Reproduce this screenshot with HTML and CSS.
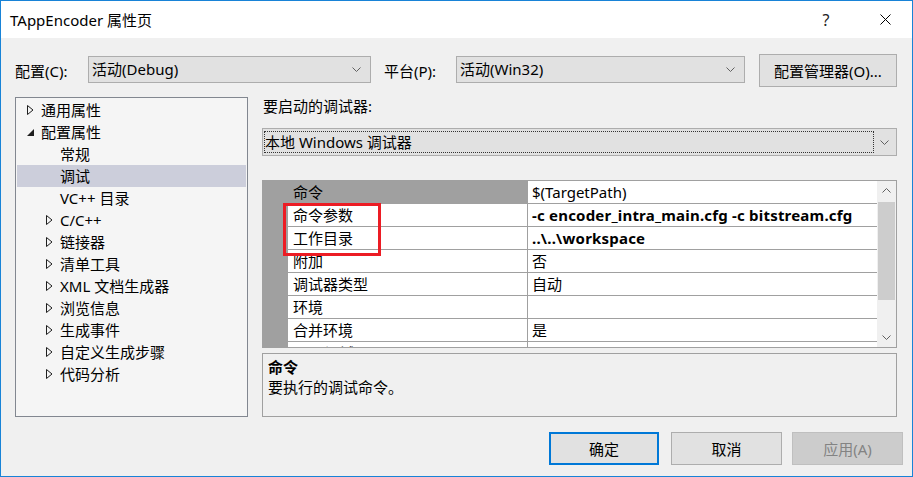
FILE: index.html
```html
<!DOCTYPE html>
<html>
<head>
    <meta charset="UTF-8">
    <title>TAppEncoder 属性页</title>
    <link rel="stylesheet" href="styles.css">
</head>
<body>
<div class="window">
    <div class="titlebar">
        <span class="title">TAppEncoder 属性页</span>
        <span class="tb-help">?</span>
        <span class="tb-close">
            <svg width="11" height="11" viewBox="0 0 11 11"><path d="M0.5 0.5 L10.5 10.5 M10.5 0.5 L0.5 10.5" stroke="#000" stroke-width="1" fill="none"/></svg>
        </span>
    </div>

    <div class="content">
        <div class="toprow">
            <span class="row-label label-config">配置(C):</span>
            <div class="combo combo-config">
                <span class="combo-text">活动(Debug)</span>
                <svg class="chev" width="9" height="5" viewBox="0 0 9 5"><path d="M0.5 0.5 L4.5 4.5 L8.5 0.5" fill="none" stroke="#606060"/></svg>
            </div>
            <span class="row-label label-platform">平台(P):</span>
            <div class="combo combo-platform">
                <span class="combo-text">活动(Win32)</span>
                <svg class="chev" width="9" height="5" viewBox="0 0 9 5"><path d="M0.5 0.5 L4.5 4.5 L8.5 0.5" fill="none" stroke="#606060"/></svg>
            </div>
            <button class="btn btn-manager">配置管理器(O)...</button>
        </div>

        <div class="main">
            <div class="tree">
                <div class="node lvl0"><span class="exp"><svg width="7" height="10" viewBox="0 0 7 10"><path d="M0.5 0.5 L6 5 L0.5 9.5 Z" fill="none" stroke="#1e1e1e"/></svg></span>通用属性</div>
                <div class="node lvl0"><span class="exp"><svg width="7" height="7" viewBox="0 0 7 7"><path d="M7 0 L7 7 L0 7 Z" fill="#1e1e1e"/></svg></span>配置属性</div>
                <div class="node lvl1"><span class="exp"></span>常规</div>
                <div class="node lvl1 selected"><span class="exp"></span>调试</div>
                <div class="node lvl1"><span class="exp"></span>VC++ 目录</div>
                <div class="node lvl1"><span class="exp"><svg width="7" height="10" viewBox="0 0 7 10"><path d="M0.5 0.5 L6 5 L0.5 9.5 Z" fill="none" stroke="#1e1e1e"/></svg></span>C/C++</div>
                <div class="node lvl1"><span class="exp"><svg width="7" height="10" viewBox="0 0 7 10"><path d="M0.5 0.5 L6 5 L0.5 9.5 Z" fill="none" stroke="#1e1e1e"/></svg></span>链接器</div>
                <div class="node lvl1"><span class="exp"><svg width="7" height="10" viewBox="0 0 7 10"><path d="M0.5 0.5 L6 5 L0.5 9.5 Z" fill="none" stroke="#1e1e1e"/></svg></span>清单工具</div>
                <div class="node lvl1"><span class="exp"><svg width="7" height="10" viewBox="0 0 7 10"><path d="M0.5 0.5 L6 5 L0.5 9.5 Z" fill="none" stroke="#1e1e1e"/></svg></span>XML 文档生成器</div>
                <div class="node lvl1"><span class="exp"><svg width="7" height="10" viewBox="0 0 7 10"><path d="M0.5 0.5 L6 5 L0.5 9.5 Z" fill="none" stroke="#1e1e1e"/></svg></span>浏览信息</div>
                <div class="node lvl1"><span class="exp"><svg width="7" height="10" viewBox="0 0 7 10"><path d="M0.5 0.5 L6 5 L0.5 9.5 Z" fill="none" stroke="#1e1e1e"/></svg></span>生成事件</div>
                <div class="node lvl1"><span class="exp"><svg width="7" height="10" viewBox="0 0 7 10"><path d="M0.5 0.5 L6 5 L0.5 9.5 Z" fill="none" stroke="#1e1e1e"/></svg></span>自定义生成步骤</div>
                <div class="node lvl1"><span class="exp"><svg width="7" height="10" viewBox="0 0 7 10"><path d="M0.5 0.5 L6 5 L0.5 9.5 Z" fill="none" stroke="#1e1e1e"/></svg></span>代码分析</div>
            </div>

            <div class="panel">
                <div class="panel-label">要启动的调试器:</div>
                <div class="combo combo-debugger">
                    <span class="combo-text focus">本地 Windows 调试器</span>
                    <svg class="chev" width="9" height="5" viewBox="0 0 9 5"><path d="M0.5 0.5 L4.5 4.5 L8.5 0.5" fill="none" stroke="#606060"/></svg>
                </div>

                <div class="grid">
                    <div class="grid-rows">
                        <div class="prop selected"><span class="pname">命令</span><span class="pval">$(TargetPath)</span></div>
                        <div class="prop"><span class="pname">命令参数</span><span class="pval bold">-c encoder_intra_main.cfg -c bitstream.cfg</span></div>
                        <div class="prop"><span class="pname">工作目录</span><span class="pval bold">..\..\workspace</span></div>
                        <div class="prop"><span class="pname">附加</span><span class="pval">否</span></div>
                        <div class="prop"><span class="pname">调试器类型</span><span class="pval">自动</span></div>
                        <div class="prop"><span class="pname">环境</span><span class="pval"></span></div>
                        <div class="prop"><span class="pname">合并环境</span><span class="pval">是</span></div>
                        <div class="prop"><span class="pname">SQL 调试</span><span class="pval">否</span></div>
                    </div>
                    <div class="scrollbar">
                        <div class="sb-arrow">
                            <svg width="9" height="5" viewBox="0 0 9 5"><path d="M0.5 4.5 L4.5 0.5 L8.5 4.5" fill="none" stroke="#606060"/></svg>
                        </div>
                        <div class="sb-track"><div class="sb-thumb"></div></div>
                        <div class="sb-arrow">
                            <svg width="9" height="5" viewBox="0 0 9 5"><path d="M0.5 0.5 L4.5 4.5 L8.5 0.5" fill="none" stroke="#606060"/></svg>
                        </div>
                    </div>
                    <div class="callout"></div>
                </div>

                <div class="desc">
                    <div class="desc-title">命令</div>
                    <div class="desc-text">要执行的调试命令。</div>
                </div>
            </div>
        </div>

        <div class="footer">
            <button class="btn btn-ok">确定</button>
            <button class="btn btn-cancel">取消</button>
            <button class="btn btn-apply" disabled>应用(A)</button>
        </div>
    </div>
</div>
</body>
</html>
```

FILE: styles.css
```css
body { margin: 0; font-family: "Noto Sans", "Noto Sans CJK SC", sans-serif; font-size: 15px; color: #000; }

.window {
    width: 913px;
    height: 477px;
    box-sizing: border-box;
    border: 1px solid #1883d7;
    background: #f0f0f0;
    display: flex;
    flex-direction: column;
}

/* title bar */
.titlebar { height: 37px; background: #fff; display: flex; align-items: center; padding-left: 9px; }
.title { flex: 1; }
.tb-help { width: 20px; text-align: center; font-size: 16px; color: #222; }
.tb-close { width: 20px; margin-left: 39px; margin-right: 17px; display: flex; justify-content: center; }

.content { flex: 1; padding: 16px 9px 0 14px; display: flex; flex-direction: column; }

/* top row */
.toprow { display: flex; align-items: flex-start; height: 34px; }
.row-label { line-height: 34px; }
.label-config { width: 73px; }
.label-platform { width: 72px; margin-left: 13px; }

.combo {
    box-sizing: border-box;
    height: 27px;
    background: #e1e1e1;
    border: 1px solid #adadad;
    display: flex;
    align-items: center;
    justify-content: space-between;
    padding: 0 9px 0 3px;
}
.combo-config { width: 283px; margin-top: 2px; }
.combo-platform { width: 289px; margin-top: 2px; }
.combo-text { line-height: 21px; }
.combo-debugger { height: 28px; margin-top: 13px; padding-left: 1px; padding-right: 7px; }
.combo-debugger .focus { flex: 1; margin-right: 6px; border: 1px dotted #333; height: 22px; box-sizing: border-box; line-height: 20px; }
.chev { display: block; }

.btn {
    box-sizing: border-box;
    font-family: inherit;
    font-size: 15px;
    color: #000;
    background: #e1e1e1;
    border: 1px solid #adadad;
    padding: 0;
    height: 33px;
}
.btn-manager { width: 138px; margin-left: 14px; }

/* main area */
.main { display: grid; grid-template-columns: 233px 635px; column-gap: 14px; margin-top: 9px; height: 320px; }

.tree { box-sizing: border-box; border: 1px solid #828790; background: #f5f5f5; padding: 1px 1px 0 1px; }
.node { height: 22px; line-height: 22px; display: flex; align-items: center; white-space: nowrap; }
.node.lvl0 { padding-left: 9px; }
.node.lvl1 { padding-left: 28px; }
.node.selected { background: #cccedb; }
.exp { width: 15px; height: 22px; flex: none; display: flex; align-items: center; padding-left: 1px; box-sizing: border-box; }
.exp svg { display: block; }

.panel { display: flex; flex-direction: column; }
.panel-label { line-height: 18px; padding-left: 1px; }

/* property grid */
.grid {
    position: relative;
    box-sizing: border-box;
    margin-top: 24px;
    height: 168px;
    border: 1px solid #a0a0a0;
    display: flex;
    background: #fff;
}
.grid-rows { flex: 1; background: #a0a0a0; overflow: hidden; padding-left: 25px; }
.prop { display: grid; grid-template-columns: 240px 1fr; height: 23px; box-sizing: border-box; border-bottom: 1px solid #a0a0a0; background: #fff; }
.pname { border-right: 1px solid #a0a0a0; padding-left: 5px; line-height: 22px; white-space: nowrap; }
.pval { padding-left: 4px; line-height: 22px; white-space: nowrap; overflow: hidden; }
.pval.bold { font-weight: bold; letter-spacing: 0.2px; }
.prop.selected .pname { background: #a0a0a0; }

.scrollbar { width: 19px; background: #f0f0f0; display: flex; flex-direction: column; }
.sb-arrow { height: 19px; display: flex; align-items: center; justify-content: center; }
.sb-track { flex: 1; padding: 2px 1px 0 1px; }
.sb-thumb { height: 98px; background: #cdcdcd; }

.callout { position: absolute; left: 20px; top: 22px; width: 98px; height: 53px; box-sizing: border-box; border: 3px solid #ec1c24; }

.desc { box-sizing: border-box; margin-top: 5px; height: 64px; border: 1px solid #a0a0a0; padding: 3px 5px; }
.desc-title { font-weight: bold; line-height: 20px; }
.desc-text { line-height: 20px; }

/* footer buttons */
.footer { display: flex; justify-content: flex-end; margin-top: 15px; }
.btn-ok { width: 110px; border: 2px solid #0078d7; }
.btn-cancel { width: 111px; margin-left: 12px; }
.btn-apply { width: 111px; margin-left: 10px; background: #cccccc; border-color: #bfbfbf; color: #838383; }
```
